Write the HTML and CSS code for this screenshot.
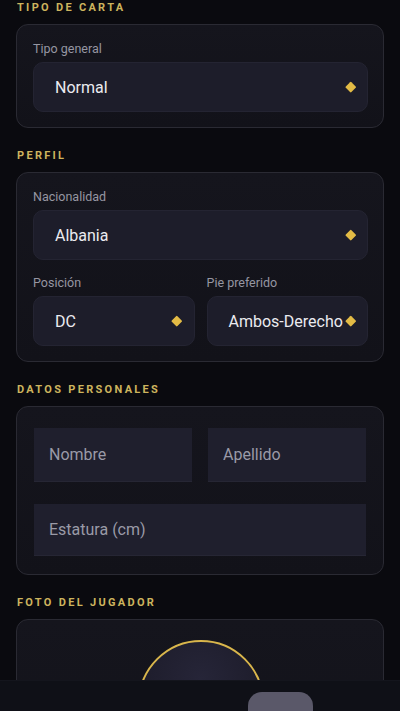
FILE: index.html
```html
<!DOCTYPE html>
<html lang="es">
<head>
<meta charset="utf-8">
<meta name="viewport" content="width=device-width, initial-scale=1">
<title>Crear carta</title>
<link rel="stylesheet" href="styles.css">
</head>
<body>
<main class="page">
  <h2 class="section-title">Tipo de carta</h2>
  <section class="card">
    <div class="field">
      <label class="field-label">Tipo general</label>
      <div class="select"><span class="select-value">Normal</span><span class="diamond"></span></div>
    </div>
  </section>

  <h2 class="section-title">Perfil</h2>
  <section class="card card-perfil">
    <div class="field">
      <label class="field-label">Nacionalidad</label>
      <div class="select"><span class="select-value">Albania</span><span class="diamond"></span></div>
    </div>
    <div class="row">
      <div class="field">
        <label class="field-label">Posición</label>
        <div class="select"><span class="select-value">DC</span><span class="diamond"></span></div>
      </div>
      <div class="field">
        <label class="field-label">Pie preferido</label>
        <div class="select"><span class="select-value">Ambos-Derecho</span><span class="diamond"></span></div>
      </div>
    </div>
  </section>

  <h2 class="section-title">Datos personales</h2>
  <section class="card card-datos">
    <div class="row row-inputs">
      <input class="text-input" type="text" placeholder="Nombre">
      <input class="text-input" type="text" placeholder="Apellido">
    </div>
    <input class="text-input text-input-short" type="text" placeholder="Estatura (cm)">
  </section>

  <h2 class="section-title">Foto del jugador</h2>
  <section class="card card-foto">
    <div class="photo-circle"></div>
  </section>
</main>

<nav class="bottom-bar">
  <div class="bottom-pill"></div>
</nav>
</body>
</html>
```

FILE: styles.css
```css
* { box-sizing: border-box; }

html, body {
  margin: 0;
  padding: 0;
  background: #0a0a0f;
  font-family: Roboto, "Noto Sans", "Liberation Sans", sans-serif;
  color: #e8e8ef;
}

.page {
  padding: 0 16px 120px 16px;
  display: flex;
  flex-direction: column;
}

.section-title {
  margin: 0 0 8px 1px;
  height: 16px;
  line-height: 16px;
  font-size: 11px;
  font-weight: 700;
  letter-spacing: 2.3px;
  text-transform: uppercase;
  color: #cdb45e;
}

.card {
  background: linear-gradient(180deg, #15151d 0%, #121219 100%);
  border: 1px solid #2a2a33;
  border-radius: 12px;
  padding: 16px 15px 15px 16px;
  margin-bottom: 20px;
  display: flex;
  flex-direction: column;
}

.card-perfil { gap: 15px; padding-bottom: 15px; }

.field {
  display: flex;
  flex-direction: column;
  gap: 5px;
  min-width: 0;
  flex: 1;
}

.field-label {
  height: 16px;
  line-height: 16px;
  font-size: 12.5px;
  color: #9696a2;
}

.select {
  height: 50px;
  border-radius: 10px;
  background: #1d1d2a;
  border: 1px solid #242432;
  display: flex;
  align-items: center;
  padding: 0 12px 0 21px;
  gap: 2px;
}

.select-value {
  flex: 1;
  font-size: 16px;
  color: #ebebf0;
  white-space: nowrap;
}

.diamond {
  flex: none;
  width: 7.5px;
  height: 7.5px;
  margin-right: 1px;
  background: #e3bb45;
  transform: rotate(45deg);
  border-radius: 1px;
}

.row {
  display: flex;
  gap: 12px;
}

.card-datos {
  padding: 21px 17px 18px 17px;
  gap: 22px;
}

.row-inputs { gap: 16px; }

.text-input {
  flex: 1;
  min-width: 0;
  height: 54px;
  border: none;
  border-bottom: 1px solid #262634;
  border-radius: 0;
  background: #1f1f2d;
  padding: 0 15px;
  font-family: inherit;
  font-size: 16px;
  color: #ebebf0;
  outline: none;
}

.text-input-short {
  flex: none;
  height: 52px;
}

.text-input::placeholder { color: #9a9aa7; }

.card-foto {
  padding-top: 20px;
  align-items: center;
  min-height: 200px;
}

.photo-circle {
  width: 126px;
  height: 126px;
  border-radius: 50%;
  border: 2px solid #d9b64c;
  background: radial-gradient(circle at 50% 30%, #262538 0%, #1c1b29 70%);
}

.bottom-bar {
  position: fixed;
  left: 0;
  right: 0;
  bottom: 0;
  height: 31px;
  background: #0f1017;
  border-top: 1px solid #14151d;
  display: flex;
  justify-content: center;
}

.bottom-pill {
  margin-top: 11px;
  margin-left: 160px;
  width: 65px;
  height: 40px;
  border-radius: 14px;
  background: #5a5869;
}
```
